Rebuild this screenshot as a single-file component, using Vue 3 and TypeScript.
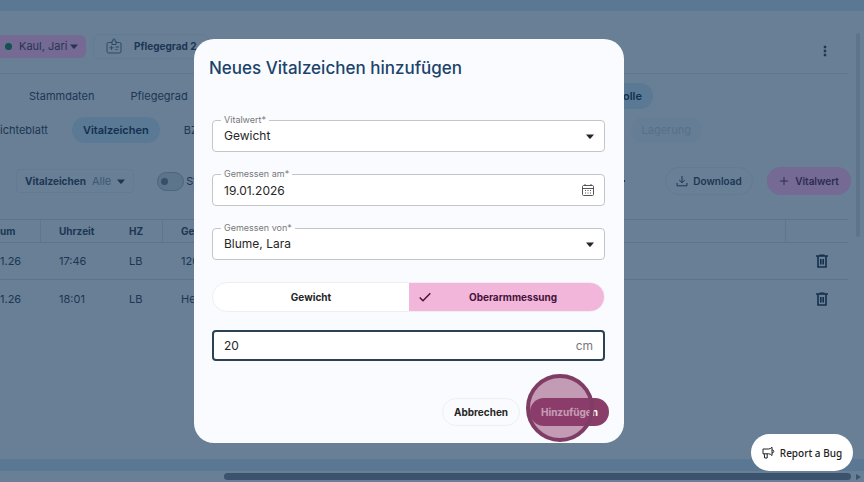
<script setup lang="ts">
import { ref } from 'vue'

interface Measurement {
  date: string
  time: string
  sign: string
  value: string
}

const rows: Measurement[] = [
  { date: '1.26', time: '17:46', sign: 'LB', value: '120' },
  { date: '1.26', time: '18:01', sign: 'LB', value: 'He' },
]

const vital = ref('Gewicht')
const measuredOn = ref('19.01.2026')
const measuredBy = ref('Blume, Lara')
const method = ref('arm')
const amount = ref('20')
const filterActive = ref(false)
</script>

<template>
  <div class="app">
    <div class="topbar"></div>
    <main class="content">
      <header class="header">
        <button class="person" type="button">
          <span class="dot"></span>
          <span>Kaul, Jari</span>
          <svg class="caret" viewBox="0 0 8 5"><path d="M0 0.5h8L4.6 4.5q-.6.6-1.2 0z" /></svg>
        </button>
        <div class="care">
          <svg class="badge" viewBox="0 0 16 16">
            <path d="M6 4.5H2.5Q1 4.5 1 6v7.5Q1 15 2.5 15h11q1.5 0 1.5-1.5V6q0-1.5-1.5-1.5H10M6 6.5V3h1.200a1.200 1.200 0 1 1 1.600 0H10v3.500zM3.500 9.800h4M5.500 7.800v4M9.500 9h3.500M9.500 11.500h2" />
          </svg>
          <span>Pflegegrad 2</span>
        </div>
        <button class="kebab" type="button" aria-label="Mehr">
          <svg viewBox="0 0 4 12"><path d="M.8.8h2.400v2.400H.8zM.8 4.800h2.400v2.400H.8zM.8 8.800h2.400v2.400H.8z" /></svg>
        </button>
      </header>

      <nav class="tabs main-tabs">
        <a href="#stammdaten">Stammdaten</a>
        <a href="#pflegegrad">Pflegegrad</a>
        <a class="active last" href="#kontrolle">olle</a>
      </nav>
      <nav class="tabs sub-tabs">
        <a class="first" href="#berichte">ichteblatt</a>
        <a class="active" href="#vitalzeichen">Vitalzeichen</a>
        <a href="#bz">BZ</a>
        <a class="last muted" href="#lagerung">Lagerung</a>
      </nav>

      <div class="toolbar">
        <button class="filter" type="button">
          <b>Vitalzeichen</b><span>Alle</span>
          <svg class="caret" viewBox="0 0 8 5"><path d="M0 0.5h8L4.6 4.5q-.6.6-1.2 0z" /></svg>
        </button>
        <label class="switch">
          <input v-model="filterActive" type="checkbox" />
          <span>St</span>
        </label>
        <div class="actions">
          <svg class="next" viewBox="0 0 5 8"><path d="M0 1l3 3-3 3" /></svg>
          <button class="download" type="button">
            <svg viewBox="0 0 12 12"><path d="M6 1v6.500M3.200 5 6 7.700 8.800 5M1 8v2.800h10V8" /></svg>
            Download
          </button>
          <button class="add" type="button">
            <svg viewBox="0 0 10 10"><path d="M5 1v8M1 5h8" /></svg>
            Vitalwert
          </button>
        </div>
      </div>

      <table class="table">
        <colgroup>
          <col class="c-date" /><col class="c-time" /><col class="c-sign" /><col /><col class="c-del" />
        </colgroup>
        <thead>
          <tr><th>um</th><th>Uhrzeit</th><th>HZ</th><th>Ge</th><th></th></tr>
        </thead>
        <tbody>
          <tr v-for="row in rows" :key="row.time">
            <td>{{ row.date }}</td>
            <td>{{ row.time }}</td>
            <td>{{ row.sign }}</td>
            <td>{{ row.value }}</td>
            <td>
              <button class="trash" type="button" aria-label="Löschen">
                <svg viewBox="0 0 12 14"><path d="M0 2h12M3.500 1.200h5M2 2.500v10.500h8V2.500M4.800 5v5.500M7.200 5v5.500" /></svg>
              </button>
            </td>
          </tr>
        </tbody>
      </table>
      <div class="vscroll"></div>
    </main>
    <div class="strip"></div>
    <div class="hscroll">
      <div class="thumb"></div>
      <svg viewBox="0 0 5 6"><path d="M0 0l5 3-5 3z" /></svg>
    </div>

    <div class="overlay">
      <form class="dialog" role="dialog" aria-labelledby="dialog-title" @submit.prevent>
        <h2 id="dialog-title">Neues Vitalzeichen hinzufügen</h2>
        <div class="fields">
          <div class="field">
            <label for="vital">Vitalwert*</label>
            <select id="vital" v-model="vital"><option>Gewicht</option></select>
            <svg class="caret" viewBox="0 0 8 5"><path d="M0 0.5h8L4.6 4.5q-.6.6-1.2 0z" /></svg>
          </div>
          <div class="field">
            <label for="date">Gemessen am*</label>
            <input id="date" v-model="measuredOn" type="text" />
            <svg class="calendar" viewBox="0 0 12 12">
              <path d="M1.500 1.500h9q1 0 1 1v8q0 1-1 1h-9q-1 0-1-1v-8q0-1 1-1zM.5 4.500h11M3 0v2M9 0v2" />
              <path d="M3 6.500h1M5.500 6.500h1M8 6.500h1M3 9h1M5.500 9h1M8 9h1" />
            </svg>
          </div>
          <div class="field">
            <label for="person">Gemessen von*</label>
            <select id="person" v-model="measuredBy"><option>Blume, Lara</option></select>
            <svg class="caret" viewBox="0 0 8 5"><path d="M0 0.5h8L4.6 4.5q-.6.6-1.2 0z" /></svg>
          </div>
        </div>
        <div class="segments">
          <label :class="{ selected: method === 'weight' }">
            <input v-model="method" type="radio" name="method" value="weight" />
            <svg v-if="method === 'weight'" viewBox="0 0 12 10"><path d="M.7 5.500 4 8.800 11.300 1.300" /></svg>
            <span>Gewicht</span>
          </label>
          <label :class="{ selected: method === 'arm' }">
            <input v-model="method" type="radio" name="method" value="arm" />
            <svg v-if="method === 'arm'" viewBox="0 0 12 10"><path d="M.7 5.500 4 8.800 11.300 1.300" /></svg>
            <span>Oberarmmessung</span>
          </label>
        </div>
        <div class="amount">
          <input id="amount" v-model="amount" type="text" aria-label="Oberarmmessung" />
          <label for="amount">cm</label>
        </div>
        <div class="buttons">
          <button class="cancel" type="button">Abbrechen</button>
          <div class="confirm">
            <button class="submit" type="submit">Hinzufügen</button>
            <span class="pointer"></span>
          </div>
        </div>
      </form>
    </div>

    <button class="bug" type="button">
      <svg viewBox="0 0 13 13">
        <path d="M1 3h5.500q2 0 3.500-1.800v8.300Q8.500 7.800 6.500 7.800H1zM2.200 7.800 2.700 12h2.500V7.800M10 3.800q1.800.2 1.800 1.600T10 7" />
      </svg>
      Report a Bug
    </button>
  </div>
</template>

<style>
body {
  margin: 0;
}
</style>

<style scoped>
.app {
  position: relative;
  display: flex;
  flex-direction: column;
  min-height: 100vh;
  overflow: hidden;
  background: #687f95;
  color: #1c3654;
  font: 11px/16px Inter, "Noto Sans", sans-serif;
}
.app * {
  box-sizing: border-box;
}
button,
input,
select {
  margin: 0;
  border: 0;
  background: none;
  color: inherit;
  font: inherit;
  padding: 0;
}
a {
  color: inherit;
  text-decoration: none;
}
svg {
  flex: none;
  fill: none;
  stroke: currentColor;
}
.caret {
  width: 8px;
  height: 5px;
  fill: currentColor;
  stroke: none;
}
.topbar {
  height: 11px;
  background: #5a7894;
}
.content {
  position: relative;
  flex: 1;
  padding-right: 16px;
}
.header {
  display: flex;
  align-items: center;
  height: 63px;
  padding-top: 8px;
  border-bottom: 1px solid #60778e;
}
.person {
  display: flex;
  align-items: center;
  gap: 7px;
  width: 86px;
  height: 23px;
  padding-left: 5px;
  border-radius: 0 6px 6px 0;
  background: #746a93;
  color: #283456;
}
.person .caret {
  margin-left: -4px;
}
.dot {
  width: 7px;
  height: 7px;
  border-radius: 50%;
  background: #12524f;
}
.care {
  display: flex;
  align-items: center;
  gap: 12px;
  height: 25px;
  margin-left: 7px;
  padding: 0 12px;
  border: 1px solid #637b92;
  border-radius: 6px;
  font-size: 10px;
  font-weight: 700;
}
.badge {
  width: 16px;
  height: 16px;
  color: #2f4a66;
}
.kebab {
  display: flex;
  margin: 10px 21px 0 auto;
}
.kebab svg {
  width: 4px;
  height: 12px;
  fill: #1c3654;
  stroke: none;
}
.tabs {
  display: flex;
  align-items: center;
  height: 34px;
}
.tabs a {
  padding: 5px 11px;
  border-radius: 13px;
}
.tabs .active {
  background: #5a7995;
  color: #12304f;
  font-weight: 600;
}
.tabs .last {
  margin-left: auto;
}
.main-tabs {
  height: 39px;
  gap: 14px;
  padding: 5px 195px 0 18px;
}
.main-tabs .last {
  padding-left: 40px;
}
.sub-tabs {
  gap: 13px;
  padding-right: 146px;
}
.sub-tabs .first {
  padding-left: 0;
}
.tabs .muted {
  color: #56708a;
  background: #667e95;
}
.toolbar {
  display: flex;
  align-items: center;
  height: 68px;
  padding-left: 16px;
}
.filter {
  display: flex;
  align-items: center;
  gap: 6px;
  height: 24px;
  padding: 0 8px;
  border: 1px solid #637a91;
  border-radius: 4px;
}
.filter b {
  font-size: 10px;
  font-weight: 700;
}
.filter span {
  color: #3f5873;
}
.switch {
  display: flex;
  align-items: center;
  gap: 2px;
  margin-left: 23px;
}
.switch input {
  display: flex;
  align-items: center;
  width: 27px;
  height: 19px;
  padding-left: 3px;
  border: 1px solid #4c647d;
  border-radius: 10px;
  background: #5d758b;
  appearance: none;
}
.switch input::before {
  width: 7px;
  height: 7px;
  border-radius: 50%;
  background: #35506c;
  content: "";
}
.actions {
  display: flex;
  align-items: center;
  margin: 0 -3px 0 auto;
}
.next {
  width: 5px;
  height: 8px;
  margin-right: 38px;
}
.download,
.add {
  display: flex;
  align-items: center;
  justify-content: center;
  height: 28px;
  border-radius: 14px;
  font-size: 10px;
}
.download {
  gap: 5px;
  width: 88px;
  border: 1px solid #637b92;
  font-weight: 600;
}
.download svg {
  width: 12px;
  height: 12px;
}
.add {
  gap: 6px;
  width: 84px;
  margin-left: 14px;
  background: #746a93;
  color: #2c2c52;
  font-weight: 600;
}
.add svg {
  width: 10px;
  height: 10px;
}
.table {
  width: 100%;
  margin-top: 4px;
  table-layout: fixed;
  border-spacing: 0;
  border-top: 1px solid #5c748b;
}
.c-date {
  width: 41px;
}
.c-time {
  width: 70px;
}
.c-sign {
  width: 52px;
}
.c-del {
  width: 62px;
}
th,
td {
  height: 37px;
  padding: 0 0 0 18px;
  border-bottom: 1px solid #5c748b;
  text-align: left;
}
th {
  height: 23px;
  border-right: 1px solid #5f778e;
  font-size: 10px;
  font-weight: 700;
}
th:last-child,
th:nth-child(2) {
  border-right: 0;
}
tbody tr:last-child td {
  border-bottom: 0;
}
th:first-child,
td:first-child {
  padding-left: 0;
}
td:last-child {
  padding-left: 30px;
}
.trash {
  display: flex;
}
.trash svg {
  width: 12px;
  height: 14px;
  color: #14304d;
  stroke-width: 1.6;
}
.vscroll {
  position: absolute;
  top: 22px;
  right: 4px;
  width: 4px;
  height: 204px;
  border-radius: 2px;
  background: #5d748b;
}
.strip {
  height: 12px;
  background: #5a7894;
}
.hscroll {
  display: flex;
  align-items: center;
  gap: 5px;
  height: 11px;
  padding-right: 3px;
  color: #3b536c;
}
.thumb {
  flex: 1;
  height: 7px;
  margin-left: 26%;
  border-radius: 4px;
  background: #3b536c;
}
.hscroll svg {
  width: 5px;
  height: 6px;
  fill: currentColor;
  stroke: none;
}
.overlay {
  position: absolute;
  inset: 0;
  display: flex;
  align-items: center;
  justify-content: center;
  padding-right: 46px;
}
.dialog {
  width: 430px;
  padding: 17px 19px 17px 18px;
  border-radius: 20px;
  background: #fafbfe;
  color: #262626;
}
h2 {
  margin: 0 0 40px -3px;
  color: #1b436b;
  font-size: 17px;
  font-weight: 500;
  line-height: 24px;
}
.fields {
  display: flex;
  flex-direction: column;
  gap: 22px;
}
.field {
  position: relative;
  display: flex;
  align-items: center;
  height: 32px;
  padding-right: 10px;
  border: 1px solid #c4c5c8;
  border-radius: 4px;
  background: #fff;
  font-size: 12px;
}
.field label {
  position: absolute;
  top: -7px;
  left: 8px;
  padding: 0 3px;
  background: linear-gradient(#fafbfe 50%, #fff 50%);
  color: #77787b;
  font-size: 9px;
  line-height: 12px;
}
.field input,
.field select {
  flex: 1;
  min-width: 0;
  height: 30px;
  padding-left: 11px;
  appearance: none;
  outline: 0;
}
.calendar {
  width: 12px;
  height: 12px;
  color: #555;
}
.segments {
  display: flex;
  height: 30px;
  margin-top: 22px;
  overflow: hidden;
  border: 1px solid #eeeff2;
  border-radius: 15px;
  background: #fff;
  font-size: 10px;
  font-weight: 700;
}
.segments label {
  display: flex;
  flex: 1;
  align-items: center;
  padding: 0 10px;
}
.segments span {
  flex: 1;
  text-align: center;
}
.segments input {
  width: 0;
  height: 0;
  appearance: none;
}
.segments svg {
  width: 12px;
  height: 10px;
  stroke-width: 1.5;
}
.segments .selected {
  margin: -1px -1px -1px 0;
  background: #f2b6da;
  color: #45133a;
}
.amount {
  display: flex;
  align-items: center;
  height: 31px;
  margin-top: 18px;
  padding: 0 10px;
  border: 2px solid #2b4254;
  border-radius: 4px;
  background: #fff;
  font-size: 12px;
}
.amount input {
  flex: 1;
  min-width: 0;
  outline: 0;
}
.amount label {
  color: #77787b;
}
.buttons {
  display: flex;
  justify-content: flex-end;
  gap: 10px;
  margin: 37px -4px 0 0;
}
.buttons button {
  height: 28px;
  border-radius: 14px;
  font-size: 10px;
  font-weight: 700;
}
.cancel {
  width: 78px;
  border: 1px solid #eeeff2;
}
.confirm {
  position: relative;
}
.submit {
  width: 79px;
  background: #8a3d69;
  color: #fff;
}
.pointer {
  position: absolute;
  top: -24px;
  left: -4px;
  width: 68px;
  height: 68px;
  border: 4px solid #7f3d65;
  border-radius: 50%;
  background: rgba(142, 60, 108, 0.5);
}
.bug {
  position: absolute;
  right: 11px;
  bottom: 11px;
  display: flex;
  align-items: center;
  justify-content: center;
  gap: 5px;
  width: 102px;
  height: 37px;
  border-radius: 19px;
  background: #fff;
  color: #222;
  font: 500 10px/16px "Noto Sans", sans-serif;
}
.bug svg {
  width: 13px;
  height: 13px;
}
</style>
